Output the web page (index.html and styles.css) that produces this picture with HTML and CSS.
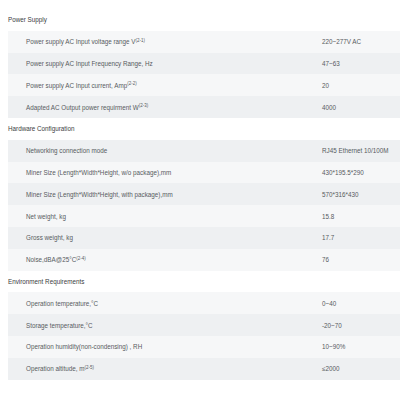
FILE: index.html
```html
<!DOCTYPE html>
<html>
<head>
<meta charset="utf-8">
<link rel="stylesheet" href="styles.css">
</head>
<body>
<div class="specs">
  <div class="heading">Power Supply</div>
  <div class="row"><span class="label">Power supply AC Input voltage range V<sup>(2-1)</sup></span><span class="value">220~277V AC</span></div>
  <div class="row"><span class="label">Power supply AC Input Frequency Range, Hz</span><span class="value">47~63</span></div>
  <div class="row"><span class="label">Power supply AC Input current, Amp<sup>(2-2)</sup></span><span class="value">20</span></div>
  <div class="row"><span class="label">Adapted AC Output power requirment W<sup>(2-3)</sup></span><span class="value">4000</span></div>

  <div class="heading">Hardware Configuration</div>
  <div class="row"><span class="label">Networking connection mode</span><span class="value">RJ45 Ethernet 10/100M</span></div>
  <div class="row"><span class="label">Miner Size (Length*Width*Height, w/o package),mm</span><span class="value">430*195.5*290</span></div>
  <div class="row"><span class="label">Miner Size (Length*Width*Height, with package),mm</span><span class="value">570*316*430</span></div>
  <div class="row"><span class="label">Net weight, kg</span><span class="value">15.8</span></div>
  <div class="row"><span class="label">Gross weight, kg</span><span class="value">17.7</span></div>
  <div class="row"><span class="label">Noise,dBA@25°C<sup>(2-4)</sup></span><span class="value">76</span></div>

  <div class="heading">Environment Requirements</div>
  <div class="row"><span class="label">Operation temperature,°C</span><span class="value">0~40</span></div>
  <div class="row"><span class="label">Storage temperature,°C</span><span class="value">-20~70</span></div>
  <div class="row"><span class="label">Operation humidity(non-condensing) , RH</span><span class="value">10~90%</span></div>
  <div class="row"><span class="label">Operation altitude, m<sup>(2-5)</sup></span><span class="value">≤2000</span></div>
</div>
</body>
</html>
```
FILE: styles.css
```css
html, body {
  margin: 0;
  padding: 0;
  background: #ffffff;
  overflow: hidden;
}
body {
  padding: 9px 0 0 8px;
  font-family: "Liberation Sans", Arial, sans-serif;
  font-size: 6.3px;
  color: #575b61;
}
.specs {
  display: flex;
  flex-direction: column;
  width: 392px;
}
.heading {
  height: 21.8px;
  display: flex;
  align-items: center;
  color: #3a3d42;
}
.row {
  height: 21.8px;
  display: flex;
  align-items: center;
  background: #f6f7f8;
}
.row:nth-of-type(odd) {
  background: #eef0f2;
}
.label {
  padding-left: 18px;
  width: 296px;
  flex: none;
}
.value {
  flex: 1;
}
sup {
  font-size: 4.5px;
  vertical-align: 0;
  position: relative;
  top: -2.5px;
}
```
